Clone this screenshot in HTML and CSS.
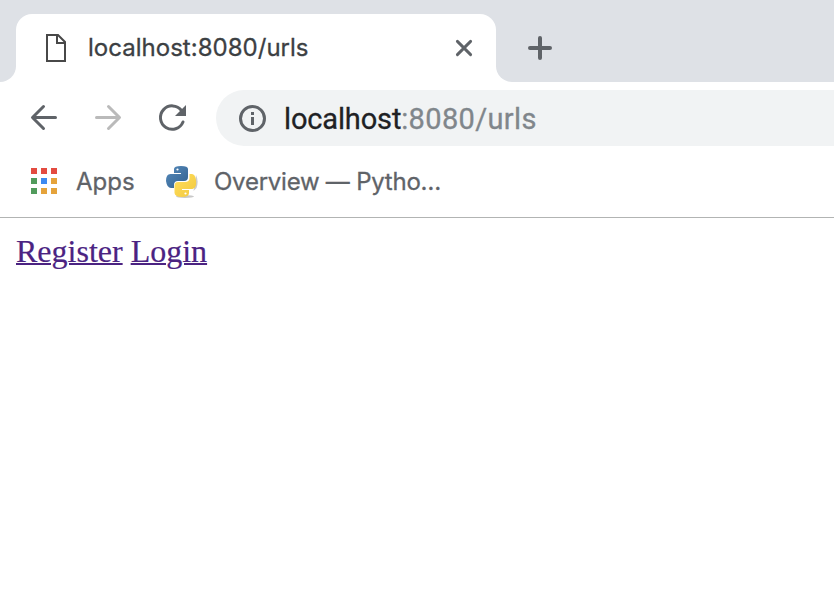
FILE: index.html
```html
<!DOCTYPE html>
<html lang="en">
<head>
<meta charset="utf-8">
<title>localhost:8080/urls</title>
<link rel="stylesheet" href="styles.css">
</head>
<body>
<header class="browser">
  <div class="tabstrip">
    <div class="strip-left"></div>
    <div class="tab-slot">
      <div class="tab">
        <svg class="file" width="22" height="30" viewBox="0 0 22 30" fill="none" stroke="#484848" stroke-width="2"><path d="M2 2H13L20 9V28H2ZM12 2V10H20"/></svg>
        <span class="tab-title">localhost:8080/urls</span>
        <svg class="close" width="20" height="20" viewBox="0 0 20 20" stroke="#5f6368" stroke-width="2.9" stroke-linecap="round"><path d="M3.4 3.4 16.6 16.6M16.6 3.4 3.4 16.6"/></svg>
      </div>
    </div>
    <div class="strip-right">
      <svg width="24" height="24" viewBox="0 0 24 24" stroke="#5f6368" stroke-width="4" stroke-linecap="round"><path d="M12 2V22M2 12H22"/></svg>
    </div>
  </div>
  <nav class="toolbar">
    <svg class="nav-icon" width="32" height="32" viewBox="0 0 32 32" fill="none" stroke="#5f6368" stroke-width="3" stroke-linecap="round" stroke-linejoin="round"><path d="M27.500 15.500H5M15.500 4.500 4.500 15.500 15.500 26.500"/></svg>
    <svg class="nav-icon" width="32" height="32" viewBox="0 0 32 32" fill="none" stroke="#bababa" stroke-width="3" stroke-linecap="round" stroke-linejoin="round"><path d="M4.500 15.500H27M16.500 4.500 27.500 15.500 16.500 26.500"/></svg>
    <svg class="nav-icon" width="32" height="32" viewBox="0 0 32 32"><path d="M25.500 8.500A11.700 11.700 0 1 0 27 20" fill="none" stroke="#5f6368" stroke-width="3" stroke-linecap="round"/><path d="M30 3V14H19Z" fill="#5f6368"/></svg>
    <div class="address">
      <svg width="28" height="28" viewBox="0 0 28 28"><circle cx="13.500" cy="14.500" r="12" fill="none" stroke="#5f6368" stroke-width="3"/><path d="M12 8h3v3h-3zM12 13h3v8h-3z" fill="#5f6368"/></svg>
      <span class="url">localhost<span class="path">:8080/urls</span></span>
    </div>
  </nav>
  <div class="bookmarks">
    <div class="apps-grid"><i class="red"></i><i class="red"></i><i class="red"></i><i class="green"></i><i class="blue"></i><i class="yellow"></i><i class="green"></i><i class="yellow"></i><i class="yellow"></i></div>
    <span class="apps">Apps</span>
    <svg class="python" width="32" height="32" viewBox="0 0 32 32">
      <defs>
        <linearGradient id="blue" x1="0" y1="0" x2="1" y2="1"><stop stop-color="#568bbc"/><stop offset="1" stop-color="#315f8e"/></linearGradient>
        <linearGradient id="gold" x1="0" y1="0" x2="1" y2="1"><stop stop-color="#ffdf60"/><stop offset="1" stop-color="#f2c83c"/></linearGradient>
      </defs>
      <ellipse cx="19" cy="30.500" rx="9" ry="1.500" fill="#c9c9c9"/>
      <path d="M30 9q3 6 .5 13l-3 3z" fill="#ccc"/>
      <path d="M8 8V3Q8 0 15 0T22 3V11Q22 15 18 15H12Q8 15 8 19V22H5Q1 22 0 15 0 8 4.500 8H15V7H8Z" fill="url(#blue)"/>
      <path d="M23.500 8H26Q29 8 30 14 31 22 26.500 23H16V24H23V27Q23 31 16 31T8.500 27V20Q8.500 16 12 16H19Q23.500 16 23.500 12Z" fill="url(#gold)"/>
      <circle cx="11.500" cy="3.500" r="1.100" fill="#fff"/><circle cx="19.500" cy="27.500" r="1.100" fill="#fff"/>
    </svg>
    <span class="overview">Overview — Pytho…</span>
  </div>
</header>
<main class="page"><a href="#">Register</a> <a href="#">Login</a></main>
</body>
</html>
```
FILE: styles.css
```css
body { margin: 0; background: #fff; overflow: hidden; }
svg { display: block; flex: none; }
.browser { font-family: Inter, "Liberation Sans", sans-serif; border-bottom: 1px solid #b2b4b3; -webkit-text-stroke: 0.3px; }
.tabstrip { display: flex; height: 82px; }
.strip-left { width: 16px; background: #dee1e6; border-bottom-right-radius: 16px; }
.tab-slot { width: 480px; box-sizing: border-box; padding-top: 14px; background: linear-gradient(#dee1e6 40px, #fff 40px); }
.tab { height: 68px; display: flex; align-items: center; background: #fff; border-radius: 16px 16px 0 0; box-sizing: border-box; padding: 0 22px 0 29px; }
.tab-title { margin-left: 21px; font-size: 24px; line-height: 30px; letter-spacing: 0.02px; color: #3c4043; white-space: nowrap; }
.close { margin-left: auto; }
.strip-right { flex: 1; box-sizing: border-box; padding: 36px 0 0 32px; background: #dee1e6; border-bottom-left-radius: 16px; }
.toolbar { display: flex; align-items: center; height: 72px; padding-left: 28px; gap: 32px; }
.address { flex: 1; height: 56px; display: flex; align-items: center; gap: 17px; margin-left: -4px; padding-left: 23px; box-sizing: border-box; background: #f1f3f4; border-radius: 28px 0 0 28px; }
.url { font: 29px/36px Roboto, sans-serif; padding-top: 1px; letter-spacing: -0.15px; color: #202124; white-space: nowrap; }
.path { color: #80868b; letter-spacing: 0.35px; }
.bookmarks { display: flex; align-items: center; height: 63px; padding-left: 31px; box-sizing: border-box; color: #5f6368; font-size: 24px; white-space: nowrap; padding-bottom: 8px; }
.apps-grid { display: grid; grid-template-columns: repeat(3, 6px); grid-auto-rows: 6px; gap: 4px; margin-bottom: 1px; }
.red { background: #e34b40; }
.green { background: #519b5c; }
.blue { background: #3e8af0; }
.yellow { background: #e5a33b; }
.apps { margin-left: 19px; width: 57px; }
.python { margin-left: 33px; }
.overview { margin-left: 16px; letter-spacing: -0.24px; }
.page { padding: 15px 16px; font: 32px/37px "Liberation Serif", serif; }
.page a { color: #4b2382; text-decoration-thickness: 2px; -webkit-text-stroke: 0.2px; }
```
